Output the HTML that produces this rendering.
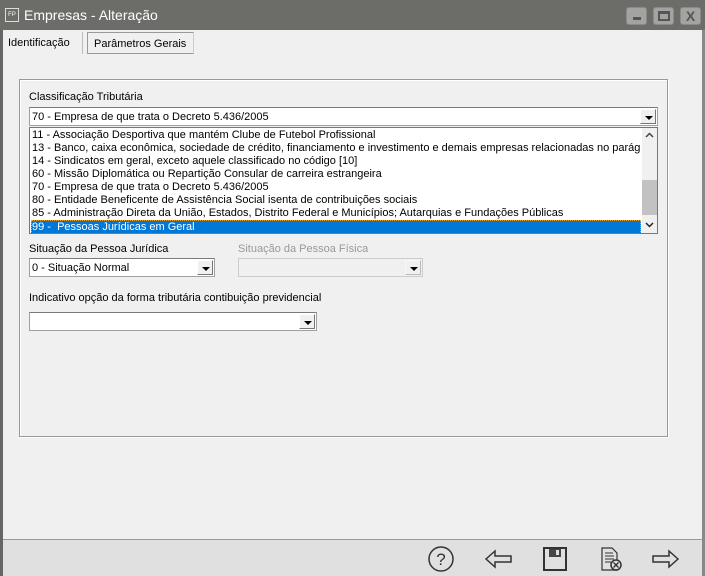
<!DOCTYPE html>
<html><head><meta charset="utf-8"><style>
*{margin:0;padding:0;box-sizing:border-box}
body{width:705px;height:576px;overflow:hidden;background:#f0f0f0;font-family:"Liberation Sans",sans-serif;font-size:11px;color:#000;position:relative}
.a{position:absolute;white-space:nowrap}
.title{left:0;top:0;width:705px;height:30px;background:#6c6c68}
.wb{top:7px;width:21px;height:18px;background:#a3a3a1;border:1px solid #8a8a87;border-radius:3px}
.combo{background:#fff;border:1px solid #a0a0a0;border-top-color:#7a7a7a}
.btn{position:absolute;right:1px;top:1px;width:16px;bottom:1px;background:#f0f0f0;border:1px solid #fff;border-right-color:#777;border-bottom-color:#777}
.btn:after{content:"";position:absolute;left:4px;top:6px;border-left:4px solid transparent;border-right:4px solid transparent;border-top:4px solid #000}
.row{position:absolute;left:1px;height:13px;line-height:13px;white-space:nowrap;padding-left:1px}
</style></head><body>
<div class="a title"></div>
<div class="a" style="left:5px;top:8px;width:14px;height:14px;border:1px solid #ddd;background:#6c6c68;color:#fff;font-size:6px;line-height:12px;text-align:center">FP</div>
<div class="a" style="left:24px;top:7px;color:#fff;font-size:14px">Empresas - Alteração</div>
<div class="a wb" style="left:626px"><div class="a" style="left:6px;top:9px;width:8px;height:3px;background:#555"></div></div>
<div class="a wb" style="left:653px"><div class="a" style="left:4px;top:3px;width:12px;height:10px;border:2px solid #555;border-top-width:3px"></div></div>
<div class="a wb" style="left:680px;color:#555;font-weight:bold;font-size:14px;line-height:16px;text-align:center">X</div>
<div class="a" style="left:0;top:30px;width:3px;height:546px;background:#666"></div>
<div class="a" style="left:702px;top:30px;width:3px;height:546px;background:#888"></div>
<div class="a" style="left:8px;top:37px">Identificação</div>
<div class="a" style="left:82px;top:32px;width:1px;height:22px;background:#bbb"></div>
<div class="a" style="left:87px;top:32px;width:107px;height:22px;border:1px solid #999;border-right-color:#ccc;padding:5px 0 0 6px">Parâmetros Gerais</div>
<div class="a" style="left:19px;top:79px;width:649px;height:358px;border:1px solid #999;box-shadow:inset 1px 1px #fff,1px 1px #fff"></div>
<div class="a" style="left:29px;top:91px">Classificação Tributária</div>
<div class="a combo" style="left:29px;top:107px;width:629px;height:19px"><div class="a" style="left:2px;top:3px">70 - Empresa de que trata o Decreto 5.436/2005</div><div class="btn"></div></div>
<div class="a" style="left:29px;top:127px;width:629px;height:107px;background:#fff;border:1px solid #777;overflow:hidden">
<div class="row" style="top:1px">11 - Associação Desportiva que mantém Clube de Futebol Profissional</div>
<div class="row" style="top:14px;width:610px;overflow:hidden">13 - Banco, caixa econômica, sociedade de crédito, financiamento e investimento e demais empresas relacionadas no parágrafo</div>
<div class="row" style="top:27px">14 - Sindicatos em geral, exceto aquele classificado no código [10]</div>
<div class="row" style="top:40px">60 - Missão Diplomática ou Repartição Consular de carreira estrangeira</div>
<div class="row" style="top:53px">70 - Empresa de que trata o Decreto 5.436/2005</div>
<div class="row" style="top:66px">80 - Entidade Beneficente de Assistência Social isenta de contribuições sociais</div>
<div class="row" style="top:79px">85 - Administração Direta da União, Estados, Distrito Federal e Municípios; Autarquias e Fundações Públicas</div>
<div class="row" style="top:92px;height:14px;line-height:15px;width:610px;background:#0078d7;color:#fff;outline:1px dotted #f0a030;outline-offset:-1px">99 -&nbsp; Pessoas Jurídicas em Geral</div>
<div class="a" style="left:612px;top:0;width:15px;height:105px;background:#f0f0f0"></div>
<div class="a" style="left:612px;top:52px;width:15px;height:35px;background:#c2c2c2"></div>
<svg class="a" style="left:612px;top:0" width="15" height="105" fill="none" stroke="#444" stroke-width="1.5"><path d="M4 9l3.5-3.5L11 9"/><path d="M4 95l3.5 3.5L11 95" stroke="#222"/></svg>
</div>
<div class="a" style="left:29px;top:243px">Situação da Pessoa Jurídica</div>
<div class="a combo" style="left:29px;top:258px;width:186px;height:19px"><div class="a" style="left:2px;top:3px">0 - Situação Normal</div><div class="btn"></div></div>
<div class="a" style="left:238px;top:243px;color:#999">Situação da Pessoa Física</div>
<div class="a" style="left:238px;top:258px;width:185px;height:19px;border:1px solid #ccc;background:#f0f0f0"><div class="btn" style="border-color:#f8f8f8 #bbb #bbb #f8f8f8"></div></div>
<div class="a" style="left:29px;top:292px">Indicativo opção da forma tributária contibuição previdencial</div>
<div class="a combo" style="left:29px;top:312px;width:288px;height:19px"><div class="btn"></div></div>
<div class="a" style="left:3px;top:539px;width:699px;height:37px;background:#e0e0e0;border-top:1px solid #999"></div>
<svg class="a" style="left:420px;top:543px" width="270" height="33" viewBox="0 0 270 33" fill="none" stroke="#333" stroke-width="1.5">
<circle cx="21" cy="16" r="12"/>
<text x="21" y="22" font-family="Liberation Sans" font-size="17" fill="#333" stroke="none" text-anchor="middle">?</text>
<path d="M66 16l9-8v5h16v6h-16v5z" stroke-linejoin="miter"/>
<rect x="124" y="5" width="22" height="22" stroke-width="2"/><rect x="129" y="6" width="12" height="8" fill="#444" stroke="none"/><rect x="136" y="7" width="3" height="5" fill="#ddd" stroke="none"/>
<path d="M182 5h10l5 5v17h-15z" stroke-width="1.2"/><path d="M185 10h8M185 13h9M185 16h9M185 19h6" stroke-width="1"/>
<circle cx="196" cy="22" r="5" fill="#e0e0e0"/><path d="M193.5 19.5l5 5M198.5 19.5l-5 5" stroke-width="1.4"/>
<path d="M258 16l-9-8v5h-16v6h16v5z"/>
</svg>
</body></html>
